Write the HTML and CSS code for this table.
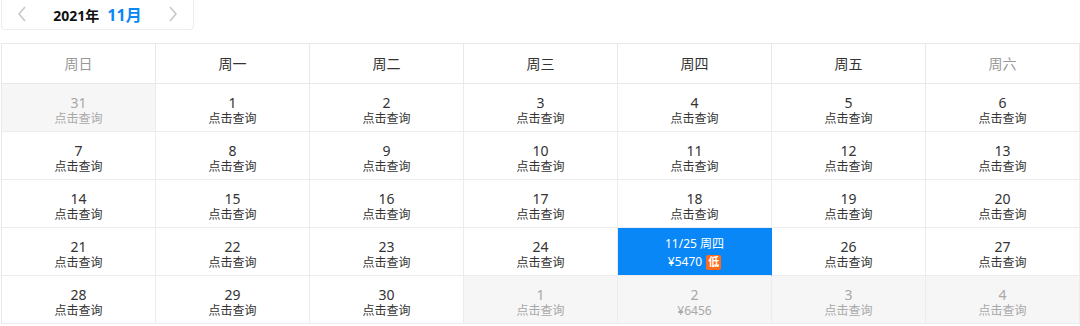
FILE: index.html
```html
<!DOCTYPE html>
<html lang="zh">
<head>
<meta charset="utf-8">
<link rel="stylesheet" href="styles.css">
</head>
<body>
<div class="page">
  <div class="month-bar">
    <span class="nav prev"><svg width="10" height="16" viewBox="0 0 10 16"><path d="M8 1 L2 8 L8 15" fill="none" stroke="#c8c8c8" stroke-width="1.6"/></svg></span>
    <span class="title"><span class="year">2021年</span><span class="month">11月</span></span>
    <span class="nav next"><svg width="10" height="16" viewBox="0 0 10 16"><path d="M2 1 L8 8 L2 15" fill="none" stroke="#c8c8c8" stroke-width="1.6"/></svg></span>
  </div>
  <div class="calendar">
    <div class="wk weekend">周日</div>
    <div class="wk">周一</div>
    <div class="wk">周二</div>
    <div class="wk">周三</div>
    <div class="wk">周四</div>
    <div class="wk">周五</div>
    <div class="wk weekend">周六</div>

    <div class="day other"><span class="num">31</span><span class="sub">点击查询</span></div>
    <div class="day"><span class="num">1</span><span class="sub">点击查询</span></div>
    <div class="day"><span class="num">2</span><span class="sub">点击查询</span></div>
    <div class="day"><span class="num">3</span><span class="sub">点击查询</span></div>
    <div class="day"><span class="num">4</span><span class="sub">点击查询</span></div>
    <div class="day"><span class="num">5</span><span class="sub">点击查询</span></div>
    <div class="day"><span class="num">6</span><span class="sub">点击查询</span></div>

    <div class="day"><span class="num">7</span><span class="sub">点击查询</span></div>
    <div class="day"><span class="num">8</span><span class="sub">点击查询</span></div>
    <div class="day"><span class="num">9</span><span class="sub">点击查询</span></div>
    <div class="day"><span class="num">10</span><span class="sub">点击查询</span></div>
    <div class="day"><span class="num">11</span><span class="sub">点击查询</span></div>
    <div class="day"><span class="num">12</span><span class="sub">点击查询</span></div>
    <div class="day"><span class="num">13</span><span class="sub">点击查询</span></div>

    <div class="day"><span class="num">14</span><span class="sub">点击查询</span></div>
    <div class="day"><span class="num">15</span><span class="sub">点击查询</span></div>
    <div class="day"><span class="num">16</span><span class="sub">点击查询</span></div>
    <div class="day"><span class="num">17</span><span class="sub">点击查询</span></div>
    <div class="day"><span class="num">18</span><span class="sub">点击查询</span></div>
    <div class="day"><span class="num">19</span><span class="sub">点击查询</span></div>
    <div class="day"><span class="num">20</span><span class="sub">点击查询</span></div>

    <div class="day"><span class="num">21</span><span class="sub">点击查询</span></div>
    <div class="day"><span class="num">22</span><span class="sub">点击查询</span></div>
    <div class="day"><span class="num">23</span><span class="sub">点击查询</span></div>
    <div class="day"><span class="num">24</span><span class="sub">点击查询</span></div>
    <div class="day selected"><span class="sel-date">11/25 周四</span><span class="sel-price">¥5470<span class="low">低</span></span></div>
    <div class="day"><span class="num">26</span><span class="sub">点击查询</span></div>
    <div class="day"><span class="num">27</span><span class="sub">点击查询</span></div>

    <div class="day"><span class="num">28</span><span class="sub">点击查询</span></div>
    <div class="day"><span class="num">29</span><span class="sub">点击查询</span></div>
    <div class="day"><span class="num">30</span><span class="sub">点击查询</span></div>
    <div class="day other"><span class="num">1</span><span class="sub">点击查询</span></div>
    <div class="day other"><span class="num">2</span><span class="sub">¥6456</span></div>
    <div class="day other"><span class="num">3</span><span class="sub">点击查询</span></div>
    <div class="day other"><span class="num">4</span><span class="sub">点击查询</span></div>
  </div>
</div>
</body>
</html>
```
FILE: styles.css
```css
* { box-sizing: border-box; }
html, body { margin: 0; padding: 0; background: #fff; }
body {
  font-family: "Noto Sans", "Noto Sans CJK SC", sans-serif;
  color: #333;
  overflow: hidden;
}
.page { padding-left: 1px; }

.month-bar {
  width: 193px;
  height: 31px;
  margin-top: -1px;
  border: 1px solid #ececec;
  border-radius: 0 0 4px 4px;
  display: flex;
  align-items: center;
  justify-content: space-between;
  padding: 0 15px 2px 15px;
}
.nav { display: flex; align-items: center; height: 16px; }
.title { display: flex; align-items: baseline; gap: 8px; }
.year { font-size: 14px; font-weight: 700; color: #111; }
.month { font-size: 16px; font-weight: 700; color: #0a86f5; }

.calendar {
  margin-top: 13px;
  display: grid;
  grid-template-columns: repeat(7, 154px);
  border-top: 1px solid #e8e8e8;
  border-left: 1px solid #e8e8e8;
  width: 1079px;
}
.wk {
  height: 40px;
  border-right: 1px solid #e8e8e8;
  border-bottom: 1px solid #e8e8e8;
  display: flex;
  align-items: center;
  justify-content: center;
  font-size: 14px;
  color: #333;
  padding-bottom: 2px;
}
.wk.weekend { color: #999; }

.day {
  height: 48px;
  border-right: 1px solid #ececec;
  border-bottom: 1px solid #ececec;
  display: flex;
  flex-direction: column;
  align-items: center;
  justify-content: center;
  padding-top: 5px;
}
.num { font-size: 14px; line-height: 17px; color: #333; }
.sub { font-size: 12px; line-height: 16px; color: #333; }
.day.other { background: #f6f6f6; }
.day.other .num, .day.other .sub { color: #a8a8a8; }

.day.selected {
  background: #0a87f7;
  border-right-color: #0a87f7;
  color: #fff;
  padding-top: 3px;
}
.sel-date { font-size: 12px; line-height: 18px; color: #fff; }
.sel-price { font-size: 12px; line-height: 18px; color: #fff; display: flex; align-items: center; }
.low {
  display: inline-flex;
  align-items: center;
  justify-content: center;
  width: 15px;
  height: 15px;
  margin-left: 4px;
  background: #ff6b1a;
  color: #fff;
  font-size: 11px;
  font-weight: 700;
  border-radius: 2px;
}
```
